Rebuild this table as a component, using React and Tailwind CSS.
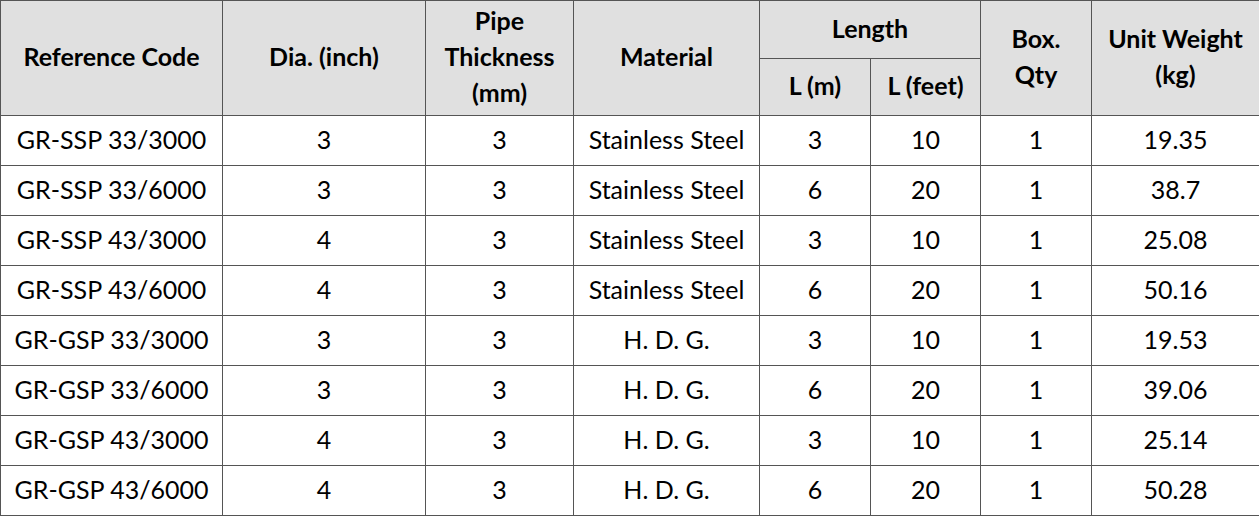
import React from "react";

const rows = [
  ["GR-SSP 33/3000", "3", "3", "Stainless Steel", "3", "10", "1", "19.35"],
  ["GR-SSP 33/6000", "3", "3", "Stainless Steel", "6", "20", "1", "38.7"],
  ["GR-SSP 43/3000", "4", "3", "Stainless Steel", "3", "10", "1", "25.08"],
  ["GR-SSP 43/6000", "4", "3", "Stainless Steel", "6", "20", "1", "50.16"],
  ["GR-GSP 33/3000", "3", "3", "H. D. G.", "3", "10", "1", "19.53"],
  ["GR-GSP 33/6000", "3", "3", "H. D. G.", "6", "20", "1", "39.06"],
  ["GR-GSP 43/3000", "4", "3", "H. D. G.", "3", "10", "1", "25.14"],
  ["GR-GSP 43/6000", "4", "3", "H. D. G.", "6", "20", "1", "50.28"],
];

const th = "border border-[#555] bg-[#e0e0e0] font-bold text-center align-middle px-0 pt-0 pb-[4px]";
const td = "border border-[#555] text-center align-middle px-0 pt-0 pb-[4px] h-[50px]";

export default function App() {
  return (
    <div className="bg-white w-[1259px] h-[516px] overflow-hidden">
      <table
        className="table-fixed border-collapse w-[1259px] text-black text-[25px] leading-[36px]"
        style={{ fontFamily: "Lato, 'Noto Sans', sans-serif" }}
      >
        <colgroup>
          <col className="w-[222px]" />
          <col className="w-[203px]" />
          <col className="w-[148px]" />
          <col className="w-[186px]" />
          <col className="w-[111px]" />
          <col className="w-[110px]" />
          <col className="w-[111px]" />
          <col className="w-[168px]" />
        </colgroup>
        <thead>
          <tr className="h-[58px]">
            <th rowSpan={2} className={th}>Reference Code</th>
            <th rowSpan={2} className={th}>Dia. (inch)</th>
            <th rowSpan={2} className={th}>
              Pipe
              <br />
              Thickness
              <br />
              (mm)
            </th>
            <th rowSpan={2} className={th}>Material</th>
            <th colSpan={2} className={th}>Length</th>
            <th rowSpan={2} className={th}>
              Box.
              <br />
              Qty
            </th>
            <th rowSpan={2} className={th}>
              Unit Weight
              <br />
              (kg)
            </th>
          </tr>
          <tr className="h-[57px]">
            <th className={th}>L (m)</th>
            <th className={th}>L (feet)</th>
          </tr>
        </thead>
        <tbody>
          {rows.map((r) => (
            <tr key={r[0]}>
              {r.map((c, i) => (
                <td key={i} className={td}>
                  {c}
                </td>
              ))}
            </tr>
          ))}
        </tbody>
      </table>
    </div>
  );
}
